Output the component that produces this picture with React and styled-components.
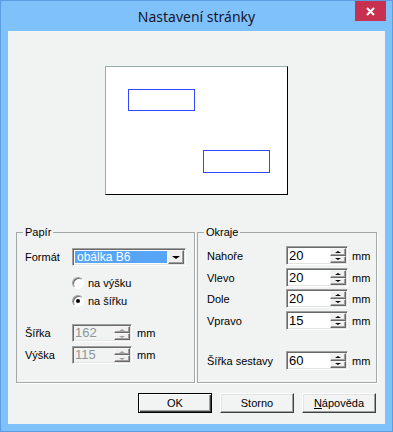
import React from "react";
import styled, { createGlobalStyle, css } from "styled-components";

const GlobalStyle = createGlobalStyle`
  html, body {
    margin: 0;
    padding: 0;
    background: #7fc1fb;
  }
  body {
    font-family: "Liberation Sans", Arial, sans-serif;
  }
`;

const Window = styled.div`
  width: 393px;
  height: 432px;
  box-sizing: border-box;
  background: #7fc1fb;
  border: 1px solid #5b9de0;
  padding: 0 7px 7px 7px;
  display: flex;
  flex-direction: column;
`;

const TitleBar = styled.div`
  height: 30px;
  display: grid;
  grid-template-columns: 1fr auto 1fr;
  align-items: start;
`;

const Title = styled.div`
  grid-column: 2;
  align-self: center;
  font-family: "Noto Sans", "Open Sans", sans-serif;
  font-size: 14px;
  color: #16162a;
  white-space: nowrap;
`;

const CloseButton = styled.div`
  grid-column: 3;
  justify-self: end;
  width: 31px;
  height: 20px;
  margin-right: -1px;
  background: #c8304f;
  display: flex;
  align-items: center;
  justify-content: center;
`;

const Client = styled.div`
  flex: 1;
  background: #f0f3f2;
  display: flex;
  flex-direction: column;
  padding: 0 9px 0 8px;
`;

const Preview = styled.div`
  padding-top: 35px;
  display: flex;
  justify-content: center;
`;

const Paper = styled.div`
  width: 183px;
  height: 129px;
  box-sizing: border-box;
  background: #fff;
  border: 1px solid;
  border-color: #9aabab #000 #000 #9aabab;
  padding: 22px;
`;

const Label = styled.div`
  box-sizing: border-box;
  width: 67px;
  height: ${(p) => p.$h}px;
  border: 1px solid #3347ff;
  margin-left: ${(p) => p.$ml || 0}px;
  margin-top: ${(p) => p.$mt || 0}px;
`;

const Groups = styled.div`
  margin-top: 30px;
  display: grid;
  grid-template-columns: 179px 180px;
  column-gap: 2px;
`;

const Group = styled.fieldset`
  margin: 0;
  min-width: 0;
  height: 158px;
  box-sizing: border-box;
  border: 1px solid #a3a9a8;
  box-shadow: 1px 1px 0 #fff;
  padding: ${(p) => p.$pt}px 0 0 ${(p) => p.$pl}px;
`;

const Legend = styled.legend`
  font-size: 11px;
  line-height: 14px;
  padding: 0 2px;
  margin-left: ${(p) => p.$ml}px;
  color: #000;
`;

const FormRow = styled.div`
  display: grid;
  grid-template-columns: ${(p) => p.$cols};
  align-items: center;
  margin-top: ${(p) => p.$mt || 0}px;
`;

const Text = styled.span`
  font-size: 11px;
  color: #000;
  white-space: nowrap;
`;

const Unit = styled(Text)`
  margin-left: ${(p) => p.$ml}px;
`;

const sunken = css`
  box-sizing: border-box;
  border: 1px solid;
  border-color: #a0a0a0 #fff #fff #a0a0a0;
  box-shadow: inset 1px 1px 0 #696969, inset -1px -1px 0 #e3e3e3;
  padding: 1px;
`;

const raised = css`
  box-sizing: border-box;
  background: #f0f0f0;
  border: 1px solid;
  border-color: #f7f7f7 #696969 #696969 #f7f7f7;
  box-shadow: inset -1px -1px 0 #a0a0a0;
`;

const Edit = styled.div`
  ${sunken};
  width: ${(p) => p.$w}px;
  height: ${(p) => p.$h}px;
  display: flex;
  background: ${(p) => (p.$disabled ? "#f0f3f2" : "#fff")};
`;

const EditValue = styled.div`
  flex: 1;
  font-size: 13px;
  line-height: ${(p) => p.$lh}px;
  padding-left: 1px;
  color: ${(p) => (p.$disabled ? "#8f9796" : "#000")};
`;

const Spinner = styled.div`
  width: 16px;
  display: flex;
  flex-direction: column;
`;

const SpinHalf = styled.div`
  ${raised};
  flex: 1;
  display: flex;
  align-items: center;
  justify-content: center;
`;

const Arrow = styled.span`
  width: 0;
  height: 0;
  border-left: ${(p) => p.$size}px solid transparent;
  border-right: ${(p) => p.$size}px solid transparent;
  ${(p) =>
    p.$up
      ? css`
          border-bottom: ${p.$size - 1}px solid ${p.$color};
        `
      : css`
          border-top: ${p.$size - 1}px solid ${p.$color};
        `}
`;

const Combo = styled.div`
  ${sunken};
  width: 114px;
  height: 18px;
  display: flex;
  background: #fff;
`;

const Selection = styled.div`
  flex: 1;
  margin: 1px;
  background: #57a5f6;
  color: #fff;
  font-size: 12px;
  line-height: 12px;
  padding-left: 2px;
`;

const DropButton = styled.div`
  ${raised};
  width: 16px;
  display: flex;
  align-items: center;
  justify-content: center;
`;

const RadioList = styled.div`
  margin: 8px 0 0 47px;
  display: flex;
  flex-direction: column;
`;

const RadioRow = styled.div`
  height: 18px;
  display: flex;
  align-items: center;
  gap: 4px;
`;

const RadioCircle = styled.span`
  width: 12px;
  height: 12px;
  box-sizing: border-box;
  border-radius: 50%;
  border: 1px solid;
  border-color: #a0a0a0 #fff #fff #a0a0a0;
  box-shadow: inset 1px 1px 0 #696969;
  background: #fff;
  display: flex;
  align-items: center;
  justify-content: center;
  &::after {
    content: "";
    width: 4px;
    height: 4px;
    border-radius: 50%;
    background: ${(p) => (p.$checked ? "#000" : "transparent")};
  }
`;

const ButtonRow = styled.div`
  margin-top: 10px;
  display: flex;
  justify-content: flex-end;
  gap: 8px;
`;

const Button = styled.div`
  width: 74px;
  height: 20px;
  box-sizing: border-box;
  font-size: 11px;
  line-height: 18px;
  text-align: center;
  color: #000;
  background: #f2f3f3;
  border: 1px solid;
  border-color: #fff #404040 #404040 #fff;
  box-shadow: inset -1px -1px 0 #a0a0a0, inset 1px 1px 0 #e3e3e3;
  ${(p) =>
    p.$default &&
    css`
      border: 1px solid #000;
      box-shadow: inset 1px 1px 0 #fff, inset -1px -1px 0 #404040,
        inset -2px -2px 0 #a0a0a0;
    `}
`;

const SpinEdit = ({ value, w, h, disabled }) => {
  const c = disabled ? "#a0a0a0" : "#000";
  return (
    <Edit $w={w} $h={h} $disabled={disabled}>
      <EditValue $lh={h - 4} $disabled={disabled}>
        {value}
      </EditValue>
      <Spinner>
        <SpinHalf>
          <Arrow $up $size={3} $color={c} />
        </SpinHalf>
        <SpinHalf>
          <Arrow $size={3} $color={c} />
        </SpinHalf>
      </Spinner>
    </Edit>
  );
};

const margins = [
  { label: "Nahoře", value: "20", mt: 0 },
  { label: "Vlevo", value: "20", mt: 3 },
  { label: "Dole", value: "20", mt: 2 },
  { label: "Vpravo", value: "15", mt: 3 },
  { label: "Šířka sestavy", value: "60", mt: 21 },
];

export default function App() {
  return (
    <>
      <GlobalStyle />
      <Window>
        <TitleBar>
          <Title>Nastavení stránky</Title>
          <CloseButton>
            <svg width="9" height="9" viewBox="0 0 9 9">
              <path d="M1 1 L8 8 M8 1 L1 8" stroke="#fff" strokeWidth="2" />
            </svg>
          </CloseButton>
        </TitleBar>
        <Client>
          <Preview>
            <Paper>
              <Label $h={22} />
              <Label $h={23} $ml={75} $mt={39} />
            </Paper>
          </Preview>
          <Groups>
            <Group $pl={8} $pt={9}>
              <Legend $ml={-2}>Papír</Legend>
              <FormRow $cols="47px 114px">
                <Text>Formát</Text>
                <Combo>
                  <Selection>obálka B6</Selection>
                  <DropButton>
                    <Arrow $size={4} $color="#000" />
                  </DropButton>
                </Combo>
              </FormRow>
              <RadioList>
                <RadioRow>
                  <RadioCircle />
                  <Text>na výšku</Text>
                </RadioRow>
                <RadioRow>
                  <RadioCircle $checked />
                  <Text>na šířku</Text>
                </RadioRow>
              </RadioList>
              <FormRow $cols="47px 60px auto" $mt={14}>
                <Text>Šířka</Text>
                <SpinEdit value="162" w={60} h={18} disabled />
                <Unit $ml={5}>mm</Unit>
              </FormRow>
              <FormRow $cols="47px 60px auto" $mt={4}>
                <Text>Výška</Text>
                <SpinEdit value="115" w={60} h={18} disabled />
                <Unit $ml={5}>mm</Unit>
              </FormRow>
            </Group>
            <Group $pl={9} $pt={7}>
              <Legend $ml={-3}>Okraje</Legend>
              {margins.map((m) => (
                <FormRow key={m.label} $cols="79px 62px auto" $mt={m.mt}>
                  <Text>{m.label}</Text>
                  <SpinEdit value={m.value} w={62} h={19} />
                  <Unit $ml={4}>mm</Unit>
                </FormRow>
              ))}
            </Group>
          </Groups>
          <ButtonRow>
            <Button $default>OK</Button>
            <Button>Storno</Button>
            <Button>
              <u>N</u>ápověda
            </Button>
          </ButtonRow>
        </Client>
      </Window>
    </>
  );
}
